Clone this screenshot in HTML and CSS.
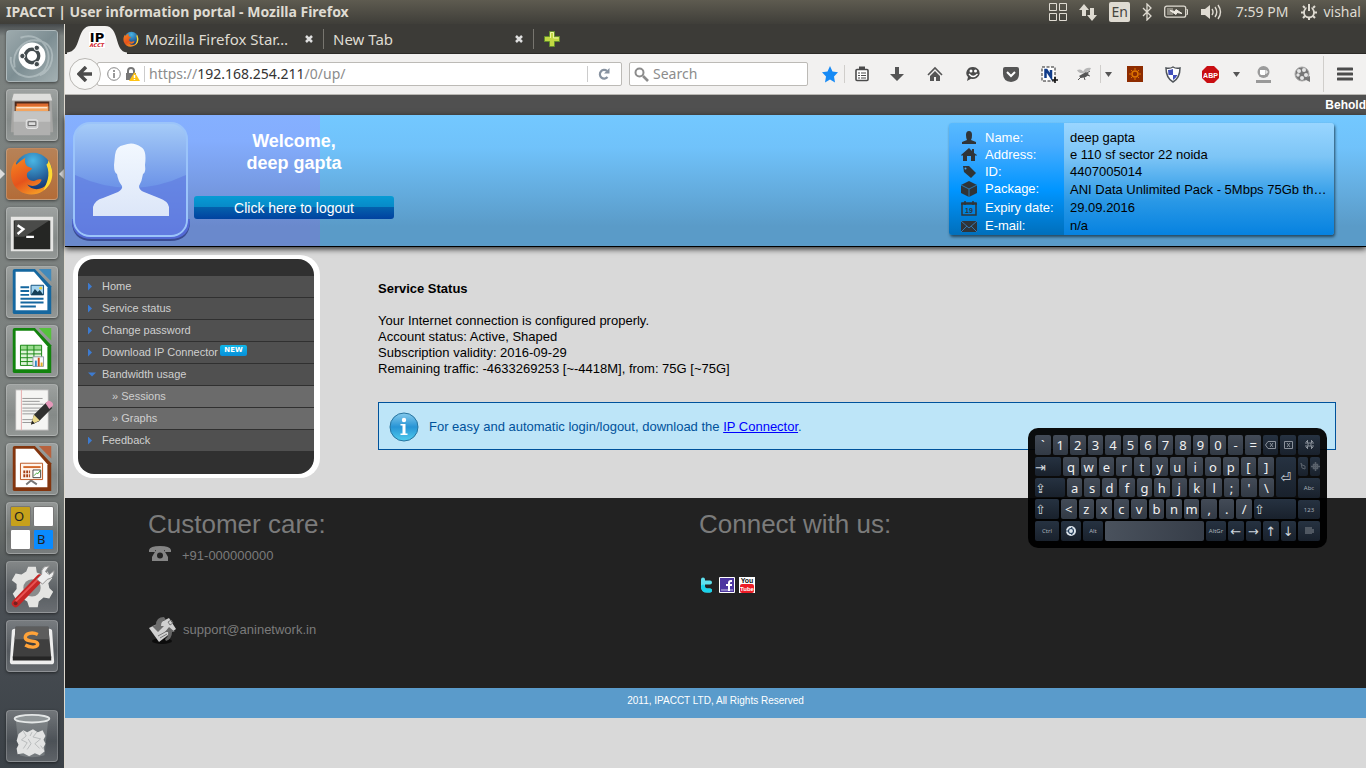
FILE: index.html
```html
<!DOCTYPE html>
<html lang="en">
<head>
<meta charset="utf-8">
<title>IPACCT | User information portal</title>
<link rel="stylesheet" href="styles.css">
</head>
<body>
<header class="panel">
  <h1 class="panel-title">IPACCT | User information portal - Mozilla Firefox</h1>
  <div class="indicators">
    <svg width="18" height="18" viewBox="0 0 18 18" fill="none" stroke="#dfdbd2"><path d="M.5.5h7v7h-7zM10.500.5h7v7h-7zM.5 10.500h7v7h-7zM10.500 10.500h7v7h-7z"/></svg>
    <svg width="18" height="17" viewBox="0 0 18 17" fill="#dfdbd2"><path d="M5 0 10 6H7v6H3V6H0zM11 4h4v7h3l-5 6-5-6h3z"/></svg>
    <span class="lang">En</span>
    <svg width="10" height="18" viewBox="0 0 10 18" fill="none" stroke="#dfdbd2" stroke-width="1.300"><path d="M1 5l8 8-4 4V1l4 4-8 8"/></svg>
    <svg width="25" height="14" viewBox="0 0 25 14"><rect x=".7" y="1.200" width="21" height="11" rx="2" fill="none" stroke="#dfdbd2" stroke-width="1.300"/><path d="M22.500 4.500h1v5h-1" fill="none" stroke="#dfdbd2"/><path d="M3 3h6v7H3z" fill="#8b887e"/><path d="M6 5.500l5 1 1-2 6 4-5-1-1 2z" fill="#eeeae2" stroke="#eeeae2"/></svg>
    <svg width="21" height="16" viewBox="0 0 21 16" fill="none" stroke="#dfdbd2" stroke-width="1.400"><path d="M0 5h4l5-4v14l-5-4H0z" fill="#dfdbd2" stroke="none"/><path d="M11 5q2 3 0 6M14 3q3.500 5 0 10M17 1q5 7 0 14"/></svg>
    <span class="clock">7:59 PM</span>
    <span class="session"><svg width="18" height="18" viewBox="0 0 18 18" fill="none" stroke="#dfdbd2"><circle cx="9" cy="9.500" r="5" stroke-width="1.800"/><path d="M9 1v7" stroke="#4c4a43" stroke-width="5"/><path d="M9 1v7M3 3l2 2M15 3l-2 2M1 9.500h3M14 9.500h3M3 15l2-2M15 15l-2-2M9 14v3" stroke-width="2"/></svg>vishal</span>
  </div>
</header>

<div class="desktop">
  <nav class="launcher" aria-label="Launcher">
    <button class="app dash" aria-label="Search"><svg viewBox="0 0 52 52"><path d="M8 38C4 20 20 4 39 12c14 8 8 30-5 34M14 7c22-8 39 18 23 36M4 27c-2 18 20 29 36 13" fill="none" stroke="#c4cfd1" stroke-width="2" opacity=".55"/><circle cx="26" cy="26" r="14" fill="#fff"/><circle cx="26" cy="26" r="7" fill="none" stroke="#434b4e" stroke-width="3.500"/><g fill="#434b4e" stroke="#fff"><circle cx="16" cy="26" r="2.800"/><circle cx="31" cy="17.500" r="2.800"/><circle cx="31" cy="34.500" r="2.800"/></g></svg></button>
    <button class="app" aria-label="Files"><svg viewBox="0 0 52 52"><path d="M6 4h40l2 40H4z" fill="#a6a6a4"/><path d="M7 4h38l2 7H5z" fill="#dededc"/><path d="M8 12h36v10H8z" fill="#4a2a1d"/><path d="M10 14h33v8H10z" fill="#dd6b30"/><path d="M9 17h34v5H9z" fill="#f4a45e"/><path d="M10 18h32v1H10z" fill="#fff"/><path d="M7 22h38v25H7z" fill="#b0b0af"/><path d="M7 22h38v11H7z" fill="#c4c4c3"/><rect x="20" y="31" width="12" height="9" rx="2" fill="#c9c9c9" stroke="#e9e9e9"/><path d="M22 33h8v4h-8z" fill="#ddd" stroke="#626262"/></svg></button>
    <button class="app firefox running" aria-label="Firefox"><svg viewBox="0 0 52 52"><defs><radialGradient id="globe" cx=".5" cy=".2" r=".7"><stop stop-color="#49b6e5"/><stop offset="1" stop-color="#173d7c"/></radialGradient><linearGradient id="fox" x2=".6" y2="1"><stop stop-color="#f78a22"/><stop offset=".6" stop-color="#e5531c"/><stop offset="1" stop-color="#f59a25"/></linearGradient></defs><g id="ff"><circle cx="27" cy="24" r="20" fill="url(#globe)"/><path d="M43 12c6 11 5 25-6 32-11 7-28 3-32-12-2-8 0-15 4-20 0 3 0 4 1 4 3-3 6-5 9-7-1 4 0 7 2 9l5 2c0 2-4 3-5 5-1 3 0 7 5 8 4 1 6-3 10-1-2 6-9 8-15 5 5 7 16 6 21-1 3-5 4-14 1-24z" fill="url(#fox)"/><path d="M43 12c7 11 5 25-5 31 3-8 8-15 3-27 1 0 2-2 2-4z" fill="#fddb33"/></g></svg></button>
    <button class="app" aria-label="Terminal"><svg viewBox="0 0 52 52"><path d="M4 9h44v36H4z" fill="#e6e6e4"/><path d="M7 13h38v30H7z" fill="#252624"/><path d="M8 13h36l-26 17H8z" fill="#4a4b49"/><path d="M11 18l6 4-6 5M20 30h8" fill="none" stroke="#fff" stroke-width="2.500"/></svg></button>
    <button class="app" aria-label="Writer"><svg viewBox="0 0 52 52"><path d="M6 4q0-2 2-2h21l17 18v29H8q-2 0-2-2z" fill="#15679f"/><path d="M33 2h13v13z" fill="#418abb"/><path d="M9 5h19l14 16v24H9z" fill="#fff"/><path d="M14 21h9M14 25h9M14 29h9M14 33h24M14 37h24M14 41h16" stroke="#15679f" stroke-width="2"/><path d="M25 19h13v10H25z" fill="#a5d4ef" stroke="#145380"/><path d="M25 29l4-6 3 3 2-2 4 5z" fill="#164058"/><circle cx="35" cy="22" r="1.500" fill="#efd138"/></svg></button>
    <button class="app" aria-label="Calc"><svg viewBox="0 0 52 52"><path d="M6 4q0-2 2-2h21l17 18v29H8q-2 0-2-2z" fill="#12830d"/><path d="M33 2h13v13z" fill="#56c13d"/><path d="M9 5h19l14 16v24H9z" fill="#fff"/><path d="M14 20h22v21H14z" fill="#dff4d9"/><path d="M14 20h22v5H14z" fill="#99db8e"/><path d="M14 20h22v21H14zM14 25h22M14 29h22M14 33h22M14 37h22M21 20v21M28 20v21" fill="none" stroke="#188613"/><path d="M27 32h11v10H27z" fill="#f5f8fa" stroke="#8b9aa5"/><path d="M29 36h2v6h-2z" fill="#348bc7"/><path d="M32 33h2v9h-2z" fill="#d55120"/><path d="M35 38h2v4h-2z" fill="#e0b126"/></svg></button>
    <button class="app" aria-label="Text Editor"><svg viewBox="0 0 52 52"><path d="M9 5h34v42H9z" fill="#f5f5f3" stroke="#aaa"/><path d="M15 5v42" stroke="#e6adad"/><path d="M16 14h21M16 17h18M16 20h22M16 24h20M16 27h19M16 30h22M16 36h17M16 39h14" stroke="#969696"/><path d="M25 41l3-10 13-13 6 6-14 14z" fill="#30302f"/><path d="M25 41l3-10 6 6z" fill="#ead98c"/><path d="M25 41l1-4 3 3z" fill="#222"/><path d="M40 19l3-3q5 1 5 5l-4 4z" fill="#e598ba"/></svg></button>
    <button class="app" aria-label="Impress"><svg viewBox="0 0 52 52"><path d="M6 4q0-2 2-2h21l17 18v29H8q-2 0-2-2z" fill="#83350e"/><path d="M33 2h13v13z" fill="#b7623e"/><path d="M9 5h19l14 16v24H9z" fill="#fff"/><path d="M14 20h23v17H14z" fill="#fff4ec" stroke="#ba5520"/><path d="M17 24h18" stroke="#d2682b" stroke-width="2"/><path d="M17 29h7M17 33h7" stroke="#a53d12" stroke-width="3" stroke-dasharray="2 1"/><path d="M27 27h8v8h-8z" fill="#fff" stroke="#444"/><path d="M28 33l3-3 1 1 3-4" fill="none" stroke="#42a338"/><path d="M20 42l5-4 6 4" fill="none" stroke="#777" stroke-width="2"/></svg></button>
    <button class="app workspaces" aria-label="Workspace Switcher"><span class="ws gold">O</span><span class="ws"></span><span class="ws"></span><span class="ws blue">B</span></button>
    <button class="app" aria-label="System Settings"><svg viewBox="0 0 52 52"><path d="M22 5h8l1 6 5 2 6-3 5 7-4 5 1 5 4 4-4 7-6-1-5 4-1 6h-9l-2-6-5-3-6 2-4-7 4-5v-5l-5-4 4-7 6 1 5-3z" fill="#e4e4e2"/><circle cx="26" cy="27" r="9" fill="#898b8b"/><path d="M9 43L34 17" stroke="#c52626" stroke-width="8" stroke-linecap="round"/><path d="M9 41L32 18" stroke="#e95353" stroke-width="2"/><path d="M31 18l5-5q-1-5 3-8l5-1-4 6 4 3 5-4q0 8-7 9l-5 5z" fill="#eee" stroke="#929292"/><circle cx="9" cy="43" r="2" fill="#742020"/></svg></button>
    <button class="app" aria-label="Sublime Text"><svg viewBox="0 0 52 52"><path d="M5 11q0-3 3-3h36q3 0 3 3l2 31q0 3-3 3H6q-3 0-3-3z" fill="#eee"/><path d="M9 6h34l3 32H6z" fill="#3f3f3f"/><path d="M9 6h34l1 13H8z" fill="#5d5d5d"/><path d="M6 37h40v4H6z" fill="#252525"/><path d="M32 14c-6-3-13-1-13 3 0 6 13 2 13 7 0 4-8 4-13 1" fill="none" stroke="#ffa339" stroke-width="3.500"/></svg></button>
    <button class="app trash" aria-label="Trash"><svg viewBox="0 0 52 52"><path d="M9 8h34l-4 38q-13 4-26 0z" fill="#b7bcbe" opacity=".3"/><path d="M12 24l5-4 4 2 6-3 5 3 5-2 3 6-2 4 2 4-2 4 1 4-5 4-5-2-6 3-6-3-6 1-1-6 2-4-2-4z" fill="#e2e3e3"/><path d="M17 21l3 5-5 4 6 3-4 6M31 22l-4 5 8 2-6 5 5 5M22 29l3 5-4 6M26 22l-2 4M35 36l3 4" fill="none" stroke="#b7babb"/><ellipse cx="26" cy="8" rx="18" ry="4" fill="#909698" stroke="#e4e7e7" stroke-width="2"/></svg></button>
  </nav>

  <div class="browser">
    <div class="tabs">
      <div class="tab-active"><svg width="60" height="30" viewBox="0 0 60 30"><path d="M0 30V28.500C15 28 9 2 24 2h14c15 0 9 26 22 26.500V30z" fill="#f2f1f0"/><path d="M22 8h16v16H22z" fill="#fff"/><text x="30" y="18" text-anchor="middle" class="fav-ip">IP</text><text x="30" y="23" text-anchor="middle" class="fav-acct">ACCT</text></svg></div>
      <div class="tab"><svg width="16" height="16" viewBox="3 2 46 46"><use href="#ff"/></svg><span class="tab-label">Mozilla Firefox Star…</span><button class="close" aria-label="Close tab"><svg width="8" height="8" viewBox="0 0 8 8"><path d="M1 1l6 6M7 1L1 7" stroke="#dedede" stroke-width="2.500"/></svg></button></div>
      <div class="tab second"><span class="tab-label">New Tab</span><button class="close" aria-label="Close tab"><svg width="8" height="8" viewBox="0 0 8 8"><path d="M1 1l6 6M7 1L1 7" stroke="#dedede" stroke-width="2.500"/></svg></button></div>
      <button class="new-tab" aria-label="Open a new tab"><svg width="16" height="16" viewBox="0 0 16 16"><path d="M5.500.5h5v5h5v5h-5v5h-5v-5h-5v-5h5z" fill="#c1d943" stroke="#638e2c"/><path d="M6.500 7V1.500h3V7h5" stroke="#edf6a0" fill="none"/></svg></button>
    </div>
    <div class="toolbar">
      <button class="back" aria-label="Back"><svg width="16" height="16" viewBox="0 0 16 16"><path d="M9 1L2 8l7 7M3 8h12" fill="none" stroke="#4c4c4c" stroke-width="3.500"/></svg></button>
      <div class="url">
        <svg width="14" height="14" viewBox="0 0 14 14"><circle cx="7" cy="7" r="6.300" fill="none" stroke="#878787"/><path d="M7 3v2M7 6v5" stroke="#777" stroke-width="1.500"/></svg>
        <svg width="15" height="15" viewBox="0 0 15 15"><path d="M3 6V4q0-3 3-3t3 3v2" fill="none" stroke="#777" stroke-width="2"/><path d="M1 6h10v7H1z" fill="#777"/><path d="M9.500 5l5.500 9H4z" fill="#ffc313"/><path d="M9.500 8v3M9.500 12v1" stroke="#fff" stroke-width="1.500"/></svg>
        <span class="rule"></span>
        <span class="address" role="textbox" aria-label="Address">https://<b>192.168.254.211</b>/0/up/</span>
        <button class="reload" aria-label="Reload"><svg width="12" height="12" viewBox="0 0 12 12"><path d="M9.500 9A4.300 4.300 0 1 1 9 3" fill="none" stroke="#8792a0" stroke-width="2.200"/><path d="M6 5.500h5.500V0z" fill="#8792a0"/></svg></button>
      </div>
      <label class="search"><svg width="15" height="15" viewBox="0 0 15 15" fill="none" stroke="#8c8c8c"><circle cx="5.500" cy="5.500" r="4" stroke-width="2"/><path d="M9 9l5 5" stroke-width="2.600"/></svg><input type="text" placeholder="Search" aria-label="Search"></label>
      <div class="tools">
        <button class="tool star" aria-label="Bookmark"><svg width="16" height="17" viewBox="0 0 16 17"><path d="M8 0l2.500 5.500 5.500.7-4 4.200 1 6.100-5-3-5 3 1-6.100L0 6.200l5.500-.7z" fill="#168af5"/></svg></button>
        <button class="tool list ruled" aria-label="Bookmarks list"><svg width="14" height="16" viewBox="0 0 14 16" fill="none" stroke="#4b4b4b"><rect x="1" y="3.500" width="12" height="11" rx="1" fill="#fff" stroke-width="1.600"/><path d="M4 2h6" stroke-width="3"/><path d="M3 7h2M6 7h5M3 9.500h2M6 9.500h5M3 12h2M6 12h5" stroke-width="1.200"/></svg></button>
        <button class="tool" aria-label="Downloads"><svg width="14" height="16" viewBox="0 0 14 16"><path d="M5 1h4v7h5l-7 7-7-7h5z" fill="#555"/></svg></button>
        <button class="tool" aria-label="Home"><svg width="16" height="16" viewBox="0 0 16 16"><path d="M1 9l7-7 7 7" fill="none" stroke="#555" stroke-width="1.600"/><path d="M3 10l5-5 5 5v5H9v-4H7v4H3z" fill="#555"/></svg></button>
        <button class="tool" aria-label="Chat"><svg width="16" height="16" viewBox="0 0 16 16"><path d="M8 1a7 6 0 1 1-2 11.800L2 15l1-4A6.500 6 0 0 1 8 1z" fill="#4b4b4b"/><g fill="#fff"><circle cx="6" cy="5" r="1.500"/><circle cx="10.500" cy="5" r="1.500"/></g><path d="M4 8q4 5 8.500 0" fill="none" stroke="#fff" stroke-width="1.300"/></svg></button>
        <button class="tool" aria-label="Pocket"><svg width="16" height="15" viewBox="0 0 16 15"><path d="M0 2q0-2 2-2h12q2 0 2 2v5q0 7-8 8-8-1-8-8z" fill="#555"/><path d="M4 5l4 4 4-4" fill="none" stroke="#fff" stroke-width="2"/></svg></button>
        <button class="tool" aria-label="Nimbus"><svg width="17" height="17" viewBox="0 0 17 17"><path d="M1 1h13v14H1z" fill="#fff" stroke="#222" stroke-dasharray="3 1.500"/><path d="M4.500 12V4h1l4.500 7V4" fill="none" stroke="#103c8a" stroke-width="2.500"/><path d="M14 11v6M11 14h6" stroke="#111" stroke-width="1.600"/></svg></button>
        <button class="tool fly" aria-label="Web developer"><svg width="16" height="14" viewBox="0 0 16 14"><path d="M1 3q5-2 7 3-5 1-7-3zM7 5q2-5 8-4-1 4-8 5z" fill="#b7b7b7"/><path d="M3 9l7-4 3 2-3 3-5 1z" fill="#555"/><path d="M5 10l-3 3M8 10l1 3M11 8l3 1M11 6l3-2" stroke="#555"/></svg></button>
        <button class="tool caret ruled" aria-label="More"><svg width="7" height="5" viewBox="0 0 7 5"><path d="M0 0h7L3.500 5z" fill="#555"/></svg></button>
        <button class="tool" aria-label="Theme"><svg width="16" height="16" viewBox="0 0 16 16"><path d="M0 0h16v16H0z" fill="#8e2c00"/><circle cx="8" cy="8" r="3" fill="none" stroke="#df7600" stroke-width="1.500"/><path d="M8 2v2M8 12v2M2 8h2M12 8h2M4 4l1 1M11 11l1 1M12 4l-1 1M4 12l1-1" stroke="#df7600"/></svg></button>
        <button class="tool" aria-label="Security"><svg width="16" height="17" viewBox="0 0 16 17"><path d="M8 1q3 2 7 1 0 10-7 14Q1 12 1 2q4 1 7-1z" fill="#fff" stroke="#50555a" stroke-width="1.500"/><path d="M3 4q3 0 5-1v6H3.500zM8 9h4.500Q11 12 8 14z" fill="#4250bb"/></svg></button>
        <button class="tool abp" aria-label="Adblock Plus"><svg width="17" height="17" viewBox="0 0 17 17"><path d="M5 0h7l5 5v7l-5 5H5l-5-5V5z" fill="#c90e12"/><text x="8.500" y="11.500" text-anchor="middle" class="abp-text">ABP</text></svg></button>
        <button class="tool caret" aria-label="Adblock options"><svg width="7" height="5" viewBox="0 0 7 5"><path d="M0 0h7L3.500 5z" fill="#555"/></svg></button>
        <button class="tool" aria-label="Coffee"><svg width="15" height="17" viewBox="0 0 15 17"><circle cx="7.500" cy="6" r="6" fill="#9b9b9b"/><path d="M4 4h5v5H5L4 8z" fill="#fff"/><path d="M9 5h2v2H9" stroke="#fff" fill="none"/><path d="M0 14h15v3H0z" fill="#999"/></svg></button>
        <button class="tool reel" aria-label="Video downloader"><svg width="17" height="17" viewBox="0 0 17 17"><circle cx="8" cy="8" r="7" fill="#777" stroke="#aaa"/><g fill="#e5e5e5"><circle cx="5" cy="5" r="2"/><circle cx="10" cy="4" r="2"/><circle cx="12" cy="9" r="2"/><circle cx="8" cy="12" r="2"/><circle cx="4" cy="9" r="1.700"/></g><path d="M10 13l6-3v6z" fill="#777"/></svg></button>
        <button class="tool menu" aria-label="Menu"><svg width="16" height="14" viewBox="0 0 16 14"><path d="M1 2h14M1 7h14M1 12h14" stroke="#4c4c4c" stroke-width="3" stroke-linecap="round"/></svg></button>
      </div>
    </div>

    <main class="page">
      <div class="ticker">Behold</div>
      <section class="hero">
        <div class="user">
          <svg class="avatar" viewBox="0 0 120 120" aria-label="User picture"><defs><linearGradient id="tile" x2="0" y2="1"><stop stop-color="#a6ccf8"/><stop offset=".55" stop-color="#6e95e8"/><stop offset="1" stop-color="#6179de"/></linearGradient><linearGradient id="person" x2="0" y2="1"><stop stop-color="#f2f8ff"/><stop offset="1" stop-color="#dce6f8"/></linearGradient></defs><path d="M1 100h118q0 20-20 20H21q-20 0-20-20z" fill="#3a4c92"/><path d="M1 98h118q0 20-20 20H21q-20 0-20-20z" fill="#5369d5"/><rect x="3" y="2" width="113" height="113" rx="16" fill="url(#tile)" stroke="#9bc4fa" stroke-width="2"/><path d="M4 54Q60 80 115 54v43q0 17-17 17H21q-17 0-17-17z" fill="#617ce0" opacity=".65"/><path d="M22 95V86q2-7 10-9l15-6q5-3 4-6-4-5-5-12-3-1-3-9l1-10q1-9 9-10 9-4 17 2 6 3 4 18 1 8-2 9-1 7-4 12 0 4 5 6l15 6q9 3 10 9v9z" fill="url(#person)"/></svg>
          <div class="welcome"><h2>Welcome,<br>deep gapta</h2><button class="logout">Click here to logout</button></div>
        </div>
        <table class="account">
          <tr><th><svg viewBox="0 0 16 16"><path d="M5 5q0-4 3-4t3 4-1 5l5 2v2H1v-2l5-2Q5 8 5 5z"/></svg>Name:</th><td>deep gapta</td></tr>
          <tr><th><svg viewBox="0 0 16 16"><path d="M0 8l8-7 3 3V2h2v4l3 2-1 1-1-1v6h-4v-5H6v5H2V8L1 9z"/></svg>Address:</th><td>e 110 sf sector 22 noida</td></tr>
          <tr><th><svg viewBox="0 0 16 16"><path d="M2 2l6 0 7 7-5 5-7-6z"/><circle cx="4.500" cy="4.500" r="1" fill="#48a9ea"/></svg>ID:</th><td>4407005014</td></tr>
          <tr class="tall"><th><svg viewBox="0 0 16 16"><path d="M8 0l8 4v8l-8 4-8-4V4z"/><path d="M0 4l8 4 8-4M8 8v8" fill="none" stroke="#2b78b0"/></svg>Package:</th><td>ANI Data Unlimited Pack - 5Mbps 75Gb th…</td></tr>
          <tr class="tall"><th><svg viewBox="0 0 16 16"><path d="M1 3h14v12H1zM0 4h16M4 1v4M12 1v4" fill="none" stroke="#303437" stroke-width="1.500"/><text x="8" y="13" text-anchor="middle" class="cal-text">19</text></svg>Expiry date:</th><td>29.09.2016</td></tr>
          <tr class="tall"><th><svg viewBox="0 0 16 16"><path d="M0 3h16v11H0z"/><path d="M0 3l8 7 8-7M0 14l6-6M16 14l-6-6" fill="none" stroke="#3476ae"/></svg>E-mail:</th><td>n/a</td></tr>
        </table>
      </section>

      <div class="body">
        <nav class="side" aria-label="Main menu">
          <ul>
            <li><a href="#">Home</a></li>
            <li><a href="#">Service status</a></li>
            <li><a href="#">Change password</a></li>
            <li><a href="#">Download IP Connector<span class="new">NEW</span></a></li>
            <li class="open"><a href="#">Bandwidth usage</a></li>
            <li class="sub"><a href="#">» Sessions</a></li>
            <li class="sub"><a href="#">» Graphs</a></li>
            <li><a href="#">Feedback</a></li>
          </ul>
        </nav>
        <section class="status">
          <h3>Service Status</h3>
          <p>Your Internet connection is configured properly.<br>Account status: Active, Shaped<br>Subscription validity: 2016-09-29<br>Remaining traffic: -4633269253 [~-4418M], from: 75G [~75G]</p>
          <div class="notice"><svg width="30" height="30" viewBox="0 0 30 30"><defs><linearGradient id="info" x2="0" y2="1"><stop stop-color="#86cbed"/><stop offset=".5" stop-color="#2794d5"/><stop offset="1" stop-color="#50cdee"/></linearGradient></defs><circle cx="15" cy="15" r="14" fill="url(#info)" stroke="#27749f"/><circle cx="15" cy="8" r="2.200" fill="#fff"/><path d="M11.500 12h5v9.500h2V23h-7v-1.500h2v-8h-2z" fill="#fff"/></svg><span>For easy and automatic login/logout, download the <a href="#">IP Connector</a>.</span></div>
        </section>
      </div>

      <footer>
        <div class="contacts">
          <section><h2>Customer care:</h2>
            <p class="phone"><svg width="24" height="18" viewBox="0 0 24 18"><path d="M1 5q1-4 11-4t11 4v2h-6V5H7v2H1z" fill="#858585"/><path d="M8 5h8l4 7v4H4v-4z" fill="#858585"/><circle cx="12" cy="10.500" r="3" fill="#222"/></svg>+91-000000000</p>
            <p class="mail"><svg width="30" height="30" viewBox="0 0 30 30"><ellipse cx="14" cy="26" rx="10" ry="3" fill="#0c0c0c"/><path d="M1 13l20-10 7 11-17 13z" fill="#d0d0d0"/><path d="M10 21l9-5M12 23l7-4M20 7l3-2 2 3-3 2z" fill="none" stroke="#777"/><path d="M8 10q0-8 8-8l2 3q-5 0-5 6l3 0-6 6-6-6z" fill="#6d6d6d"/><path d="M21 12l6 5h-3q0 7-6 9l-1-2q4-2 3-7h-3z" fill="#666"/></svg>support@aninetwork.in</p>
          </section>
          <section><h2>Connect with us:</h2>
            <div class="social">
              <a href="#" aria-label="Twitter"><svg width="16" height="16" viewBox="0 0 16 16"><path d="M4 2.500v7q0 4 4 4h3M5 5.500h6" fill="none" stroke="#5fe0ee" stroke-width="4" stroke-linecap="round"/><path d="M4 9.500q0 4 4 4h3" fill="none" stroke="#19d2ea" stroke-width="4" stroke-linecap="round"/></svg></a>
              <a href="#" aria-label="Facebook"><svg width="16" height="16" viewBox="0 0 16 16"><path d="M.5.5h15v15H.5z" fill="#4c36a0" stroke="#fff"/><path d="M2 12h12v2H2z" fill="#8b7dc2"/><path d="M13 4h-1q-2 0-2 2v8M7 8h6" fill="none" stroke="#fff" stroke-width="2"/></svg></a>
              <a href="#" aria-label="YouTube"><svg width="16" height="16" viewBox="0 0 16 16"><path d="M0 0h16v16H0z" fill="#fff"/><rect x="1" y="7" width="14" height="9" rx="2" fill="#ed1d27"/><text x="8" y="6" text-anchor="middle" class="yt-you">You</text><text x="8" y="14" text-anchor="middle" class="yt-tube">Tube</text></svg></a>
            </div>
          </section>
        </div>
        <p class="copyright">2011, IPACCT LTD, All Rights Reserved</p>
      </footer>
    </main>
  </div>
</div>

<div class="keyboard" aria-label="On-screen keyboard">
  <div class="keys">
    <div class="row"><button>`</button><button>1</button><button>2</button><button>3</button><button>4</button><button>5</button><button>6</button><button>7</button><button>8</button><button>9</button><button>0</button><button>-</button><button>=</button><button class="dark" aria-label="Backspace"><svg width="11" height="8" viewBox="0 0 11 8"><path d="M3 .5h7.500v7H3L.5 4zM5 2l3 4M8 2L5 6" fill="none" stroke="#8a919a"/></svg></button><button class="dark" aria-label="Delete"><svg width="9" height="8" viewBox="0 0 9 8"><path d="M.5.5h8v7h-8zM3 2l3 4M6 2L3 6" fill="none" stroke="#8a919a"/></svg></button></div>
    <div class="middle">
      <div class="pair">
        <div class="row"><button class="dark tabkey">⇥</button><button>q</button><button>w</button><button>e</button><button>r</button><button>t</button><button>y</button><button>u</button><button>i</button><button>o</button><button>p</button><button>[</button><button>]</button></div>
        <div class="row"><button class="dark caps">⇪</button><button>a</button><button>s</button><button>d</button><button>f</button><button>g</button><button>h</button><button>j</button><button>k</button><button>l</button><button>;</button><button>'</button><button>\</button></div>
      </div>
      <button class="dark enter">⏎</button>
    </div>
    <div class="row"><button class="dark lshift">⇧</button><button>&lt;</button><button>z</button><button>x</button><button>c</button><button>v</button><button>b</button><button>n</button><button>m</button><button>,</button><button>.</button><button>/</button><button class="dark rshift">⇧</button></div>
    <div class="row"><button class="dark mod ctrl">Ctrl</button><button class="dark mod" aria-label="Super"><svg width="10" height="10" viewBox="0 0 10 10"><circle cx="5" cy="5" r="5" fill="#dce4ec"/><circle cx="5" cy="5" r="2.500" fill="none" stroke="#28415c" stroke-width="1.200"/><path d="M0 5h2M6 1l-1 2M6 9L5 7" stroke="#28415c"/></svg></button><button class="dark mod">Alt</button><button class="space" aria-label="Space"></button><button class="dark mod">AltGr</button><button class="dark">←</button><button class="dark">→</button><button class="dark">↑</button><button class="dark">↓</button></div>
  </div>
  <div class="extras">
    <button class="dark" aria-label="Close keyboard"><svg width="9" height="9" viewBox="0 0 9 9"><path d="M1 1l2 2M8 1L6 3M1 8l2-2M8 8L6 6M3 3h3v3H3zM0 3h2.500V0M6.500 0v3H9M0 6h2.500v3M6.500 9V6H9" fill="none" stroke="#8a919a"/></svg></button>
    <div class="row"><button class="dark" aria-label="Click type"><svg width="6" height="9" viewBox="0 0 6 9"><path d="M1 1l1 5 3 1V4L2 3z" fill="none" stroke="#59616b"/></svg></button><button class="dark" aria-label="Move"><svg width="9" height="9" viewBox="0 0 9 9"><path d="M4.500 0v9M0 4.500h9M2.500 2.500h4v4h-4z" fill="none" stroke="#59616b" stroke-width="1.500"/></svg></button></div>
    <button class="dark mod">Abc</button>
    <button class="dark mod">123</button>
    <button class="dark" aria-label="Layouts"><svg width="9" height="8" viewBox="0 0 9 8"><path d="M0 0h7v2h2v4H7v1H0z" fill="#505862"/></svg></button>
  </div>
</div>
</body>
</html>
```

FILE: styles.css
```css
* { box-sizing: border-box; }

body {
  margin: 0;
  min-height: 100vh;
  display: flex;
  flex-direction: column;
  overflow-x: hidden;
  background: #d9d9d9;
  font: 13px/16px "Liberation Sans", Arial, sans-serif;
  color: #000;
}

button {
  margin: 0;
  padding: 0;
  border: 0;
  background: none;
  font: inherit;
  color: inherit;
}

svg { flex: none; display: block; }
h1, h2, h3, p, ul { margin: 0; padding: 0; }

/* Desktop panel */
.panel {
  display: flex;
  align-items: center;
  justify-content: space-between;
  height: 24px;
  padding: 0 5px 0 6px;
  background: linear-gradient(#5e5b50, #3f3e39);
  color: #dfdbd2;
  font: 14px/20px "Noto Sans", sans-serif;
}
.panel-title { font-size: 14px; font-weight: 700; }
.indicators { display: flex; align-items: center; gap: 12px; }
.lang {
  padding: 0 2px;
  border-radius: 2px;
  background: #dfdbd2;
  color: #45443f;
}
.clock { padding-left: 2px; }
.session { display: flex; align-items: center; gap: 5px; }

.desktop { display: flex; flex: 1; }

/* Launcher */
.launcher {
  display: flex;
  flex-direction: column;
  gap: 7px;
  width: 65px;
  padding: 6px;
  border-right: 1px solid #ded9cf;
  background: linear-gradient(#44484a, #7c8280 12px, #7b807e 440px, #646967 510px, #4b5055 570px, #3b4147);
}
.app {
  position: relative;
  width: 52px;
  height: 52px;
  border-radius: 4px;
  border: 1px solid rgba(255, 255, 255, .2);
  background: linear-gradient(rgba(255, 255, 255, .26), rgba(255, 255, 255, .08) 60%, rgba(255, 255, 255, .18));
  box-shadow: 0 1px 3px rgba(0, 0, 0, .5);
}
.app svg { width: 100%; height: 100%; }
.dash { background: linear-gradient(135deg, #9daaad, #7d8e93 50%, #a3b0b2); }
.firefox { background: linear-gradient(#b78257, #b36c38); }
.running::before, .running::after {
  content: "";
  position: absolute;
  top: 20px;
  border: 5px solid transparent;
}
.running::before { left: -7px; border-left-color: #ddd; }
.running::after { right: -7px; border-right-color: #ddd; }
.workspaces {
  display: grid;
  grid-template-columns: 21px 21px;
  grid-template-rows: 21px 21px;
  gap: 2px;
  place-content: center;
}
.ws {
  border: 1px solid #777;
  border-radius: 2px;
  background: #fff;
  color: #222;
  font: 13px/18px "Noto Sans", sans-serif;
  padding-left: 3px;
  text-align: left;
}
.gold { background: #c6a11b; }
.blue { background: #0a8bff; }
.trash { margin-top: auto; }

/* Browser */
.browser { flex: 1; min-width: 0; display: flex; flex-direction: column; }
.tabs {
  display: flex;
  align-items: center;
  height: 30px;
  padding-left: 2px;
  border-bottom: 1px solid #2b2a27;
  background: #3c3b37;
  color: #dfdbd2;
  font: 15px/20px "Noto Sans", sans-serif;
}
.tab-active { width: 56px; height: 30px; }
.fav-ip { font: 700 13px "DejaVu Sans", sans-serif; }
.fav-acct { font: italic 700 5px "DejaVu Sans", sans-serif; fill: #d01020; }
.tab { display: flex; align-items: center; width: 200px; gap: 6px; }
.tab-label { flex: 1; white-space: nowrap; }
.close { padding: 4px 10px 4px 0; }
.tab.second { width: 211px; padding-left: 9px; border-left: 1px solid #77756f; border-right: 1px solid #77756f; }
.new-tab { padding-left: 10px; }

.toolbar {
  display: flex;
  align-items: center;
  height: 41px;
  padding-left: 4px;
  border-bottom: 1px solid #b9b7b3;
  background: #f2f1f0;
  font: 14px/20px "Noto Sans", sans-serif;
}
.back {
  z-index: 1;
  display: grid;
  place-items: center;
  width: 32px;
  height: 32px;
  border: 1px solid #b9b7b3;
  border-radius: 50%;
  background: #f8f8f7;
}
.url {
  display: flex;
  align-items: center;
  gap: 4px;
  flex: 1;
  height: 24px;
  margin-left: -4px;
  padding-left: 9px;
  border: 1px solid #bcbab6;
  border-radius: 2px;
  background: #fff;
}
.rule { width: 1px; height: 16px; background: #ccc; }
.address { flex: 1; color: #8c8c8c; white-space: nowrap; }
.address b { font-weight: 400; color: #333; }
.reload { height: 16px; padding: 0 11px 0 10px; border-left: 1px solid #ccc; }
.search {
  display: flex;
  align-items: center;
  gap: 4px;
  width: 179px;
  height: 24px;
  margin: 0 8px 0 7px;
  padding-left: 4px;
  border: 1px solid #bcbab6;
  border-radius: 2px;
  background: #fff;
}
.search input {
  flex: 1;
  min-width: 0;
  padding: 0;
  border: 0;
  outline: 0;
  background: none;
  font: inherit;
}
.search input::placeholder { color: #8c8c8c; }
.tools { display: flex; align-items: center; }
.tool { display: grid; place-items: center; width: 38px; height: 18px; }
.star { width: 28px; }
.list { width: 34px; }
.fly { width: 32px; }
.ruled { border-left: 1px solid #d0cecb; }
.caret { width: 16px; }
.abp { width: 36px; }
.reel { width: 41px; }
.menu { width: 43px; height: 36px; border-left: 1px solid #d0cecb; }
.abp-text { font: 700 7px "Liberation Sans", sans-serif; fill: #fff; }

/* Portal */
.page { flex: 1; display: flex; flex-direction: column; background: #d9d9d9; }
.ticker {
  height: 20px;
  background: #505050;
  color: #fff;
  font: 700 12px/20px "Liberation Sans", sans-serif;
  text-align: right;
}
.hero {
  z-index: 1;
  display: flex;
  justify-content: space-between;
  height: 132px;
  padding-right: 32px;
  border-bottom: 1px solid #000;
  background: linear-gradient(#73c8ff, #70c2fa 25%, #5a9bc8 85%, #5a9bc8);
  box-shadow: 0 2px 6px rgba(0, 0, 0, .8);
}
.user {
  display: flex;
  width: 255px;
  padding: 6px 0 0 6px;
  background: linear-gradient(#85b0ff, #84adfd 20%, #6a89cc 85%);
}
.avatar { width: 120px; height: 120px; }
.welcome {
  flex: none;
  display: flex;
  flex-direction: column;
  justify-content: space-between;
  width: 200px;
  height: 98px;
  margin-left: 3px;
  padding-top: 9px;
  text-align: center;
}
.welcome h2 { color: #fff; font-size: 18px; line-height: 22px; }
.logout {
  height: 23px;
  border-radius: 3px;
  background: linear-gradient(#079bd4, #078ac8 48%, #0460ac 50%, #0042a0);
  color: #fff;
  font-size: 14px;
}
.account {
  width: 385px;
  height: 112px;
  margin-top: 8px;
  padding: 6px 0 0;
  table-layout: fixed;
  border-collapse: separate;
  border-spacing: 0;
  border-radius: 3px;
  background:
    linear-gradient(#57baff, #48adff 20%, #0095ff 60%, #006fbb) 0 0 / 115px 100% no-repeat,
    linear-gradient(#99d6ff, #7dc5f6 30%, #2998e6 70%, #0682e0);
  box-shadow: 1px 2px 3px #24485f;
}
.account tr { height: 17px; }
.account .tall { height: 18px; }
.account th {
  display: flex;
  align-items: center;
  gap: 8px;
  width: 115px;
  height: 17px;
  padding: 0 0 0 12px;
  color: #fff;
  font-weight: 400;
  white-space: nowrap;
}
.account .tall th { height: 18px; }
.account th svg { width: 16px; height: 16px; fill: #303437; }
.account td {
  width: 270px;
  padding: 0 0 0 6px;
  white-space: nowrap;
}
.cal-text { font: 700 7px "Liberation Sans", sans-serif; }

.body { display: flex; align-items: flex-start; padding: 8px 30px 20px 8px; }
.side {
  width: 247px;
  flex: none;
  padding: 4px 6px 4px 5px;
  border-radius: 20px;
  background: #fff;
}
.side ul {
  padding: 17px 0 22px;
  border-radius: 16px;
  background: #303030;
  list-style: none;
}
.side li {
  display: flex;
  align-items: center;
  height: 22px;
  padding-left: 10px;
  border-bottom: 1px solid #303030;
  background: #505050;
}
.side li::before {
  content: "";
  width: 14px;
  height: 8px;
  background: #3d7bd0;
  clip-path: polygon(0 0, 4px 50%, 0 100%);
}
.side .open::before { clip-path: polygon(0 2px, 8px 2px, 4px 6px); }
.side .sub { padding-left: 34px; background: #6b6b6b; }
.side .sub::before { display: none; }
.side a {
  display: flex;
  align-items: center;
  padding-bottom: 2px;
  color: #cfcfcf;
  font-size: 11px;
  text-decoration: none;
}
.new {
  width: 27px;
  margin: 0 0 3px 2px;
  border-radius: 2px;
  background: linear-gradient(#10b7e8, #078fda);
  color: #fff;
  font: 700 7px/11px "DejaVu Sans", sans-serif;
  text-align: center;
}
.status { flex: 1; padding-top: 26px; margin-left: 58px; }
.status h3 { font-size: 13px; margin-bottom: 16px; }
.notice {
  display: flex;
  align-items: center;
  gap: 10px;
  height: 48px;
  margin-top: 25px;
  padding: 1px 0 0 10px;
  border: 1px solid #00529b;
  background: #bde5f8;
  color: #00529b;
}
.notice a { color: #00f; }

footer { color: #7b7b7b; }
.contacts {
  display: grid;
  grid-template-columns: 1fr 1fr;
  height: 190px;
  padding: 11px 116px 0 83px;
  background: #222;
}
.contacts h2 { font-size: 26px; line-height: 30px; font-weight: 400; }
.contacts p { display: flex; align-items: center; }
.phone { gap: 10px; height: 34px; line-height: 18px; }
.phone svg { margin-bottom: 4px; }
.mail { gap: 5px; margin-top: 42px; }
.social { display: flex; gap: 4px; margin-top: 38px; }
.yt-you { font: 700 7px "Liberation Sans", sans-serif; fill: #111; }
.yt-tube { font: 700 6px "Liberation Sans", sans-serif; fill: #fff; }
.copyright {
  height: 30px;
  background: #5a9bcb;
  color: #fff;
  font-size: 10px;
  line-height: 26px;
  text-align: center;
}

/* On-screen keyboard floating over the desktop */
.keyboard {
  position: absolute;
  z-index: 2;
  top: 428px;
  right: 39px;
  display: flex;
  gap: 2px;
  width: 299px;
  height: 120px;
  padding: 7px;
  border-radius: 10px;
  background: rgba(0, 0, 0, .95);
  color: #f1f1f1;
  font: 13px/16px "Noto Sans", "DejaVu Sans", sans-serif;
}
.keys, .extras { display: grid; gap: 2px; }
.keys { flex: 1; grid-template-rows: 20px 1fr 20px 20px; }
.extras { width: 22px; grid-template-rows: repeat(5, 1fr); }
.row { display: flex; gap: 2px; min-width: 0; min-height: 0; }
.middle { display: flex; gap: 2px; min-height: 0; }
.pair { flex: 1; display: grid; grid-template-rows: 1fr 1fr; gap: 2px; }
.keyboard button {
  display: grid;
  place-items: center;
  flex: 1 1 0;
  min-width: 0;
  overflow: hidden;
  border-radius: 2px;
  background: linear-gradient(#434b57, #323a45);
}
.keyboard .dark { background: linear-gradient(#263241, #19212c); color: #cfd6dd; }
.keyboard .mod { flex: 0 0 20px; color: #a8b0b8; font-size: 6px; }
.keyboard .tabkey { flex: 0 0 26px; place-items: center start; }
.keyboard .caps { flex: 0 0 30px; place-items: center start; }
.keyboard .enter { flex: 0 0 20px; }
.keyboard .lshift { flex: 0 0 24px; place-items: center start; }
.keyboard .ctrl { flex: 0 0 24px; }
.keyboard .rshift { flex: 0 0 42px; place-items: center start; }
.keyboard .space { flex: 0 0 99px; background: linear-gradient(100deg, #4a525d, #363d48); }
```
